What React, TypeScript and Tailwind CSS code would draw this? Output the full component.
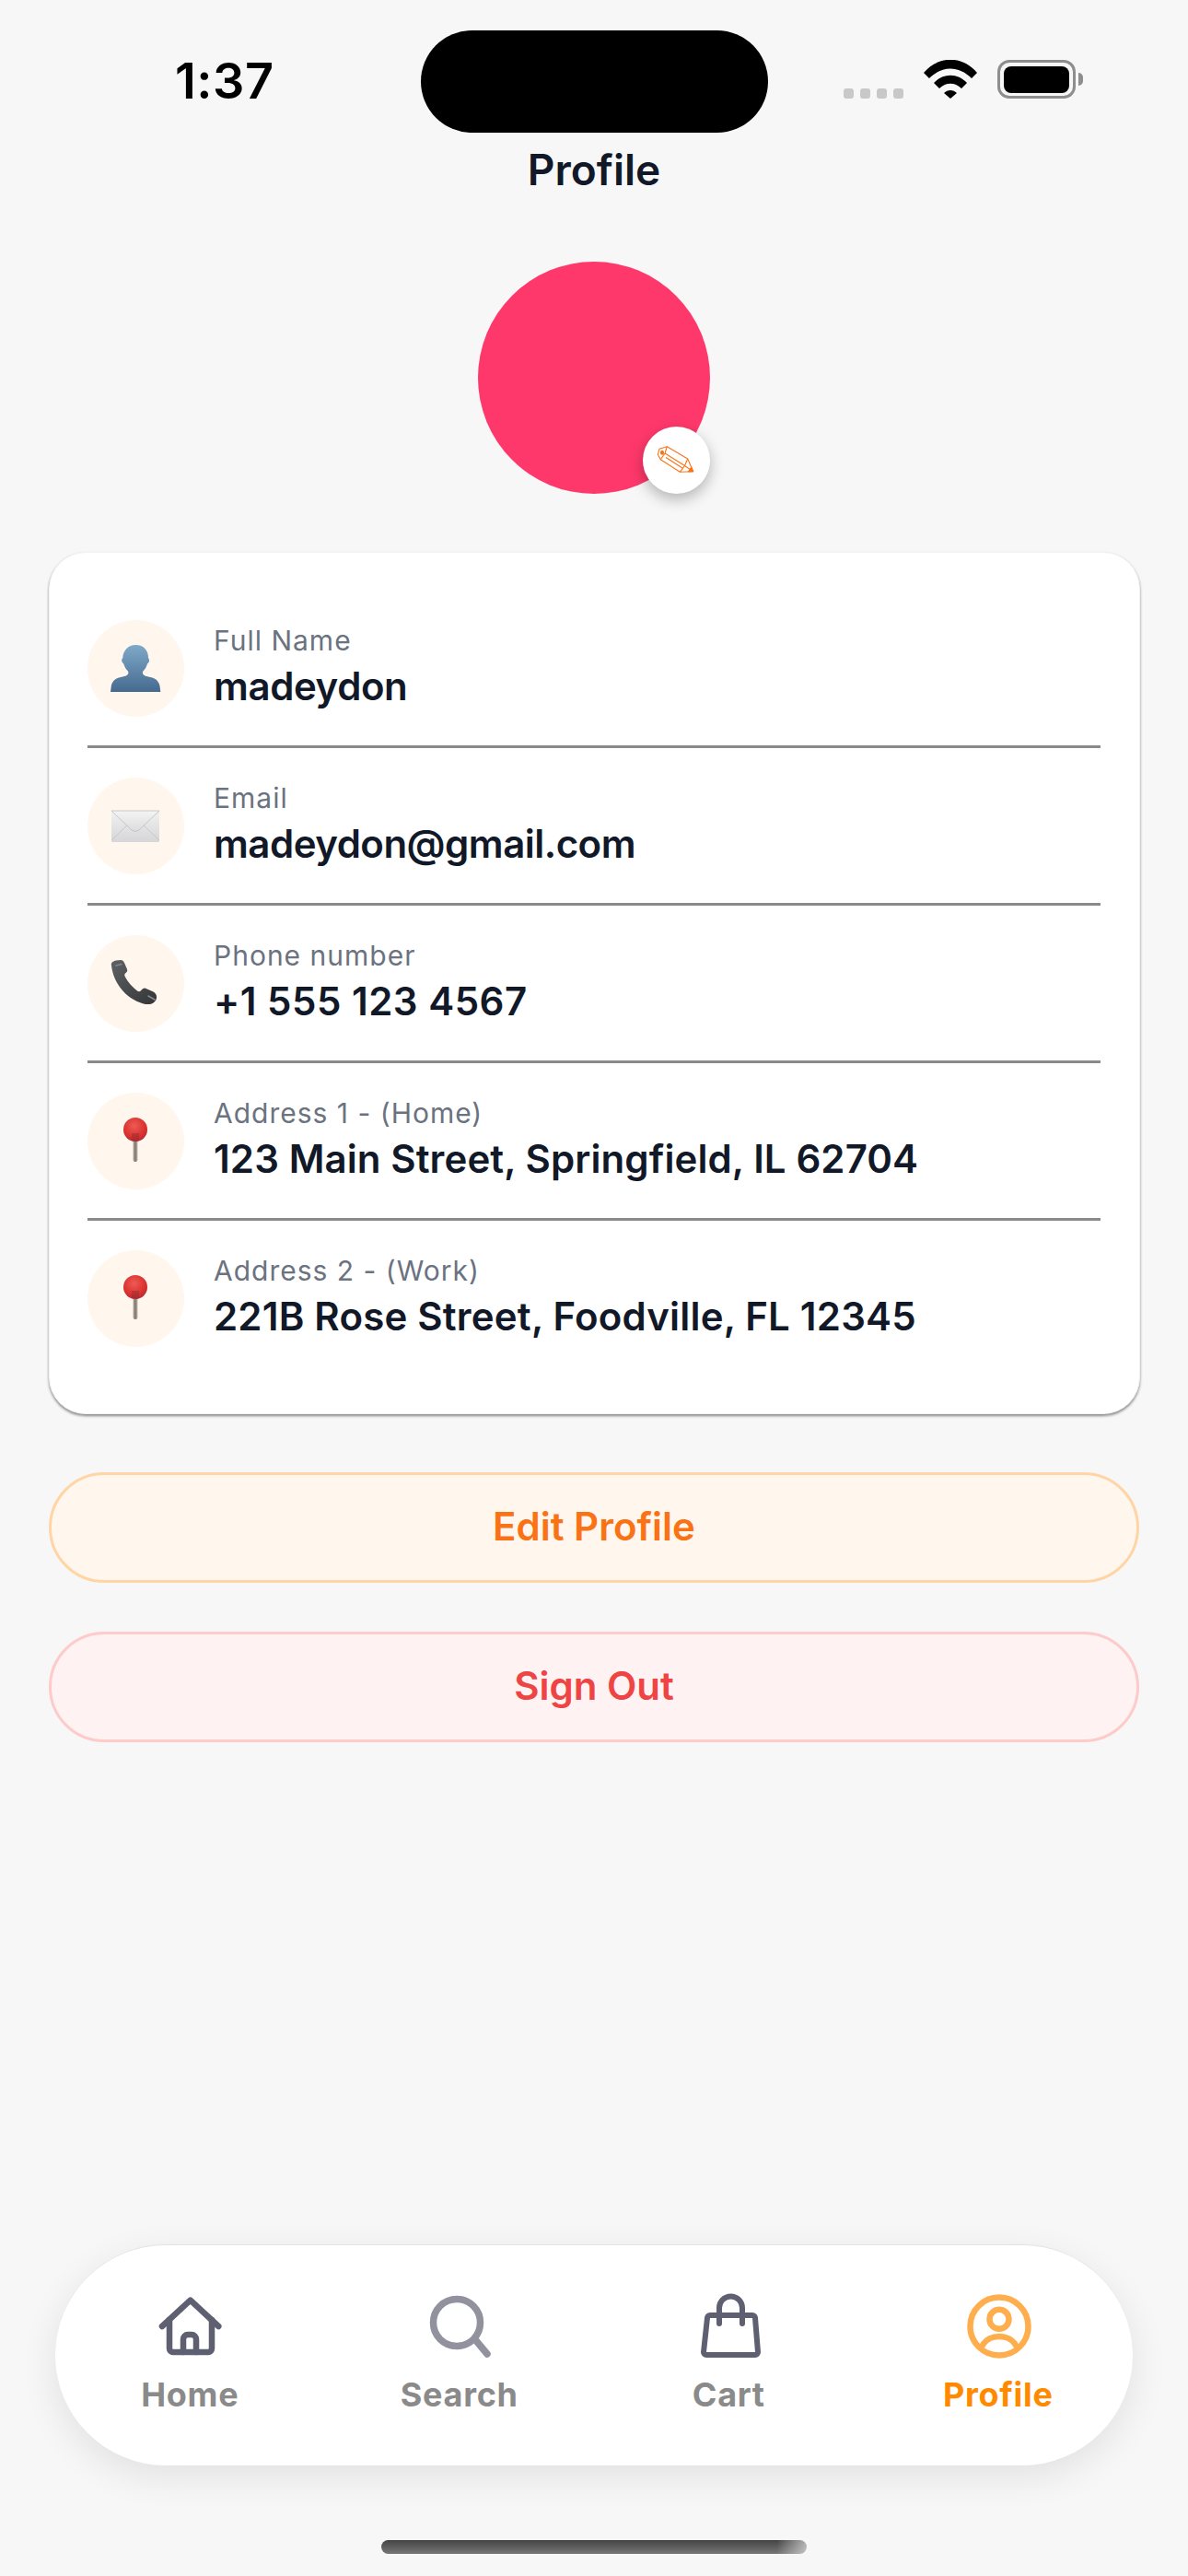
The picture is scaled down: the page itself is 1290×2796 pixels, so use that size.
import React from "react";

const FONT = "font-['Inter','Liberation_Sans',sans-serif]";

function PersonGlyph() {
  return (
    <svg width="105" height="105" viewBox="0 0 105 105">
      <defs>
        <linearGradient id="personFill" x1="0" y1="0" x2="0" y2="1">
          <stop offset="0" stopColor="#7fa9c8" />
          <stop offset="1" stopColor="#456a8f" />
        </linearGradient>
      </defs>
      <path
        d="M52.5 27c8.500 0 13.500 6 13.500 13.500 0 1.500 1.500 1.500 1 4-.4 2-1.500 2.500-2 3-1 4-3.500 7-5 8.500-.5 3 1 4.500 6 5.500 6 1 11 3 12.500 10l.8 6.500H25l.8-6.500c1.500-7 6.500-9 12.500-10 5-1 6.500-2.500 6-5.500-1.500-1.500-4-4.500-5-8.500-.5-.5-1.600-1-2-3-.5-2.500 1-2.500 1-4C39 33 44 27 52.500 27z"
        fill="url(#personFill)"
      />
    </svg>
  );
}

function EnvelopeGlyph() {
  return (
    <svg width="105" height="105" viewBox="0 0 105 105">
      <defs>
        <linearGradient id="envFill" x1="0" y1="0" x2="0" y2="1">
          <stop offset="0" stopColor="#f1f1f1" />
          <stop offset="1" stopColor="#d6d6d8" />
        </linearGradient>
        <linearGradient id="envFlap" x1="0" y1="0" x2="0" y2="1">
          <stop offset="0" stopColor="#f4f4f4" />
          <stop offset="1" stopColor="#dcdcde" />
        </linearGradient>
      </defs>
      <rect x="26" y="36" width="52" height="34" rx="1.500" fill="url(#envFill)" />
      <path d="M26 68 L46 49 M78 68 L58 49" stroke="#c2c2c4" strokeWidth="0.800" fill="none" />
      <path d="M26 36 L48 57 Q52 60 56 57 L78 36Z" fill="url(#envFlap)" stroke="#bdbdc0" strokeWidth="0.800" />
    </svg>
  );
}

function PhoneGlyph() {
  return (
    <svg width="105" height="105" viewBox="0 0 105 105">
      <defs>
        <linearGradient id="phoneFill" x1="0" y1="0" x2="1" y2="1">
          <stop offset="0" stopColor="#5f6264" />
          <stop offset="1" stopColor="#333537" />
        </linearGradient>
      </defs>
      <path
        d="M26 33c-1-3 2-5 5-5.500l5-.5c2 0 3 1 4 3l3 7c.8 2-.2 3-2 4.500-1 .8-1 2 0 4 3 6 8 11 13 15 1.500 1 2.800 1 4-.3 1.500-1.500 3-3 5-2.500l8 3.500c3 1.500 4.500 4 4 7-.5 3-3 5.500-6 6.500-3 .8-6 .3-9-.5C42 69 28 52 26 33z"
        fill="url(#phoneFill)"
      />
      <path d="M31 33l6-1.500M66 66l7 4" stroke="#85888a" strokeWidth="1.500" strokeLinecap="round" fill="none" />
    </svg>
  );
}

function PinGlyph({ id }: { id: string }) {
  return (
    <svg width="105" height="105" viewBox="0 0 105 105">
      <defs>
        <radialGradient id={id} cx="0.45" cy="0.35" r="0.7">
          <stop offset="0" stopColor="#ef5a55" />
          <stop offset="0.7" stopColor="#d8302c" />
          <stop offset="1" stopColor="#a82a3a" />
        </radialGradient>
        <linearGradient id={`${id}-stem`} x1="0" y1="0" x2="1" y2="0">
          <stop offset="0" stopColor="#b8aea2" />
          <stop offset="0.5" stopColor="#7d756c" />
          <stop offset="1" stopColor="#c2b9ad" />
        </linearGradient>
      </defs>
      <rect x="49.500" y="48" width="5" height="27" rx="2.500" fill={`url(#${id}-stem)`} />
      <circle cx="52" cy="40" r="13" fill={`url(#${id})`} />
      <path d="M48 44h8v8.500h-8z" fill="#8f2a32" opacity="0.450" />
    </svg>
  );
}

function PencilGlyph() {
  return (
    <svg width="72" height="72" viewBox="0 0 72 72" fill="none" stroke="#f97316" strokeWidth="1.100" strokeLinejoin="round">
      <path d="M18 24.300 L26.300 21.700 L48.700 35 L54.700 48.700 L40.300 49.300 L19.300 35.700 L16.300 30.300Z" />
      <path d="M24 29 L26.300 21.700 M24 29 L19.300 35.700 M24 29 L45.500 42.500 L48.700 35 M45.500 42.500 L40.300 49.300 M45.500 42.500 L54.700 48.700 M25 33.500 L43 45" />
      <path d="M49.500 48.900 L54.700 48.700 L52.700 44.100Z" fill="#f97316" />
      <ellipse cx="21" cy="28.300" rx="1.500" ry="2" fill="#f97316" />
    </svg>
  );
}

function HomeIcon() {
  return (
    <svg width="74" height="74" viewBox="0 0 74 74" fill="none" stroke="#5e6072" strokeWidth="6.500" strokeLinecap="round" strokeLinejoin="round">
      <path d="M7 36 L37.700 7.700 L68.300 36" />
      <path d="M15 29 V60 a4 4 0 0 0 4 4 H57 a4 4 0 0 0 4-4 V29" />
      <path d="M30 64 V50 a5 5 0 0 1 5-5 h4 a5 5 0 0 1 5 5 V64" />
    </svg>
  );
}

function SearchIcon() {
  return (
    <svg width="74" height="74" viewBox="0 0 74 74" fill="none" stroke="#92929e" strokeWidth="7.500" strokeLinecap="round">
      <circle cx="34" cy="32" r="25.500" />
      <path d="M54.500 51 L67 66" />
    </svg>
  );
}

function BagIcon() {
  return (
    <svg width="74" height="74" viewBox="0 0 74 74" fill="none" stroke="#5e6072" strokeWidth="6" strokeLinecap="round" strokeLinejoin="round">
      <path d="M17 24 H63 a3 3 0 0 1 3 3 L69 64 a3 3 0 0 1-3 3 H13 a3 3 0 0 1-3-3 L14 27 a3 3 0 0 1 3-3Z" />
      <path d="M27 33 V16 a12.500 12.500 0 0 1 25 0 V33" />
    </svg>
  );
}

function ProfileIcon() {
  return (
    <svg width="74" height="74" viewBox="0 0 74 74" fill="none" stroke="#ffae4d" strokeWidth="6.500" strokeLinecap="round">
      <circle cx="38" cy="36" r="31.500" />
      <circle cx="38" cy="28.300" r="10.500" />
      <path d="M19.700 57 C27 43.500 49 43.500 56.300 57" />
    </svg>
  );
}

const rows = [
  { label: "Full Name", value: "madeydon", fit: "tracking-[-0.4px]", icon: <PersonGlyph /> },
  { label: "Email", value: "madeydon@gmail.com", fit: "tracking-[-0.5px]", icon: <EnvelopeGlyph /> },
  { label: "Phone number", value: "+1 555 123 4567", fit: "tracking-[0.5px]", icon: <PhoneGlyph /> },
  { label: "Address 1 - (Home)", value: "123 Main Street, Springfield, IL 62704", fit: "tracking-[0.1px]", icon: <PinGlyph id="pinHome" /> },
  { label: "Address 2 - (Work)", value: "221B Rose Street, Foodville, FL 12345", fit: "tracking-[0.2px]", icon: <PinGlyph id="pinWork" /> },
];

const tabs = [
  { label: "Home", icon: <HomeIcon />, active: false },
  { label: "Search", icon: <SearchIcon />, active: false },
  { label: "Cart", icon: <BagIcon />, active: false },
  { label: "Profile", icon: <ProfileIcon />, active: true },
];

export default function App() {
  return (
    <div className={`${FONT} flex h-[2796px] w-[1290px] flex-col overflow-hidden bg-[#f7f7f7]`}>
      {/* Status bar */}
      <div className="flex h-[144px] shrink-0 items-start pt-[33px]">
        <div className="w-[457px] pl-[190px] pt-[26px] text-[54px] leading-[58px] font-semibold tracking-[0.5px] text-black">1:37</div>
        <div className="h-[111px] w-[377px] rounded-[56px] bg-black" />
        <div className="ml-[82px] flex h-[74px] items-end">
          <div className="flex gap-[7px]">
            <span className="h-[11px] w-[11px] rounded-[3px] bg-[#c8c8c8]" />
            <span className="h-[11px] w-[11px] rounded-[3px] bg-[#c8c8c8]" />
            <span className="h-[11px] w-[11px] rounded-[3px] bg-[#c8c8c8]" />
            <span className="h-[11px] w-[11px] rounded-[3px] bg-[#c8c8c8]" />
          </div>
          <svg className="ml-[22px]" width="58" height="42" viewBox="0 0 58 42" fill="#000">
            <path d="M0 14 C16 -5 42 -5 58 14 L52 20 C38 6 20 6 6 20Z" />
            <path d="M11 25 C21 14 37 14 47 25 L41 31 C34 24 24 24 17 31Z" />
            <path d="M22 36 C26 32 32 32 36 36 L29 42Z" />
          </svg>
          <div className="ml-[22px] flex items-center">
            <div className="flex h-[42px] w-[85px] items-center justify-center rounded-[13px] border-[3.500px] border-[#8e8e8e]">
              <div className="h-[29px] w-[71px] rounded-[8px] bg-black" />
            </div>
            <div className="ml-[3px] h-[14px] w-[5px] rounded-r-full bg-[#8e8e8e]" />
          </div>
        </div>
      </div>

      <h1 className="mt-[12px] h-[56px] text-center text-[46px] leading-[56px] font-semibold text-[#111827]">Profile</h1>

      {/* Avatar */}
      <div className="relative mx-auto mt-[72px] h-[252px] w-[252px] shrink-0 rounded-full bg-[#ff386b]">
        <div className="absolute right-0 bottom-0 h-[73px] w-[73px] rounded-full bg-white shadow-[0_6px_16px_rgba(0,0,0,0.28)]">
          <PencilGlyph />
        </div>
      </div>

      {/* Details card */}
      <div className="mt-[63px] mr-[52px] ml-[53px] shrink-0 rounded-[40px] border border-[#f2f2f2] bg-white py-[41px] pr-[42px] pl-[41px] shadow-[0_2px_3px_rgba(0,0,0,0.45)]">
        {rows.map((row, i) => (
          <div
            key={row.label}
            className={`flex gap-[32px] pt-[32px] pb-[31px] ${i < rows.length - 1 ? "border-b-[3px] border-[#8a8a8a]" : ""}`}
          >
            <div className="flex h-[105px] w-[105px] shrink-0 items-center justify-center rounded-full bg-[#fff6ed]">
              {row.icon}
            </div>
            <div className="flex flex-col gap-[7px] pt-[4px]">
              <div className="text-[30px] leading-[36px] tracking-[1px] text-[#6b7280]">{row.label}</div>
              <div className={`text-[42px] leading-[50px] font-semibold text-[#111827] ${row.fit}`}>{row.value}</div>
            </div>
          </div>
        ))}
      </div>

      {/* Actions */}
      <button className="mx-[53px] mt-[63px] flex h-[120px] shrink-0 items-center justify-center rounded-full border-[3px] border-[#ffd5a5] bg-[#fff6ed] pb-[3px] text-[42px] font-semibold text-[#f97316]">
        Edit Profile
      </button>
      <button className="mx-[53px] mt-[53px] flex h-[120px] shrink-0 items-center justify-center rounded-full border-[3px] border-[#fecaca] bg-[#fef2f2] pb-[3px] text-[42px] font-semibold text-[#ef4444]">
        Sign Out
      </button>

      {/* Tab bar */}
      <nav className="mx-[60px] mt-auto grid h-[240px] shrink-0 grid-cols-4 rounded-full border-t border-[#e3e3e3] bg-white pt-[52px] shadow-[0_12px_40px_rgba(0,0,0,0.09)]">
        {tabs.map((tab) => (
          <div key={tab.label} className="flex flex-col items-center">
            <div className="h-[74px] w-[74px]">{tab.icon}</div>
            <span className={`mt-[14px] text-[36px] leading-[44px] font-bold tracking-[0.7px] ${tab.active ? "text-[#ff8a00]" : "text-[#8a8a8a]"}`}>
              {tab.label}
            </span>
          </div>
        ))}
      </nav>

      {/* Home indicator */}
      <div className="mx-auto mt-[81px] mb-[24px] h-[15px] w-[462px] shrink-0 rounded-full bg-[linear-gradient(to_right,transparent_93%,rgba(247,247,247,0.6)),linear-gradient(to_bottom,#444444,#777777)]" />
    </div>
  );
}
